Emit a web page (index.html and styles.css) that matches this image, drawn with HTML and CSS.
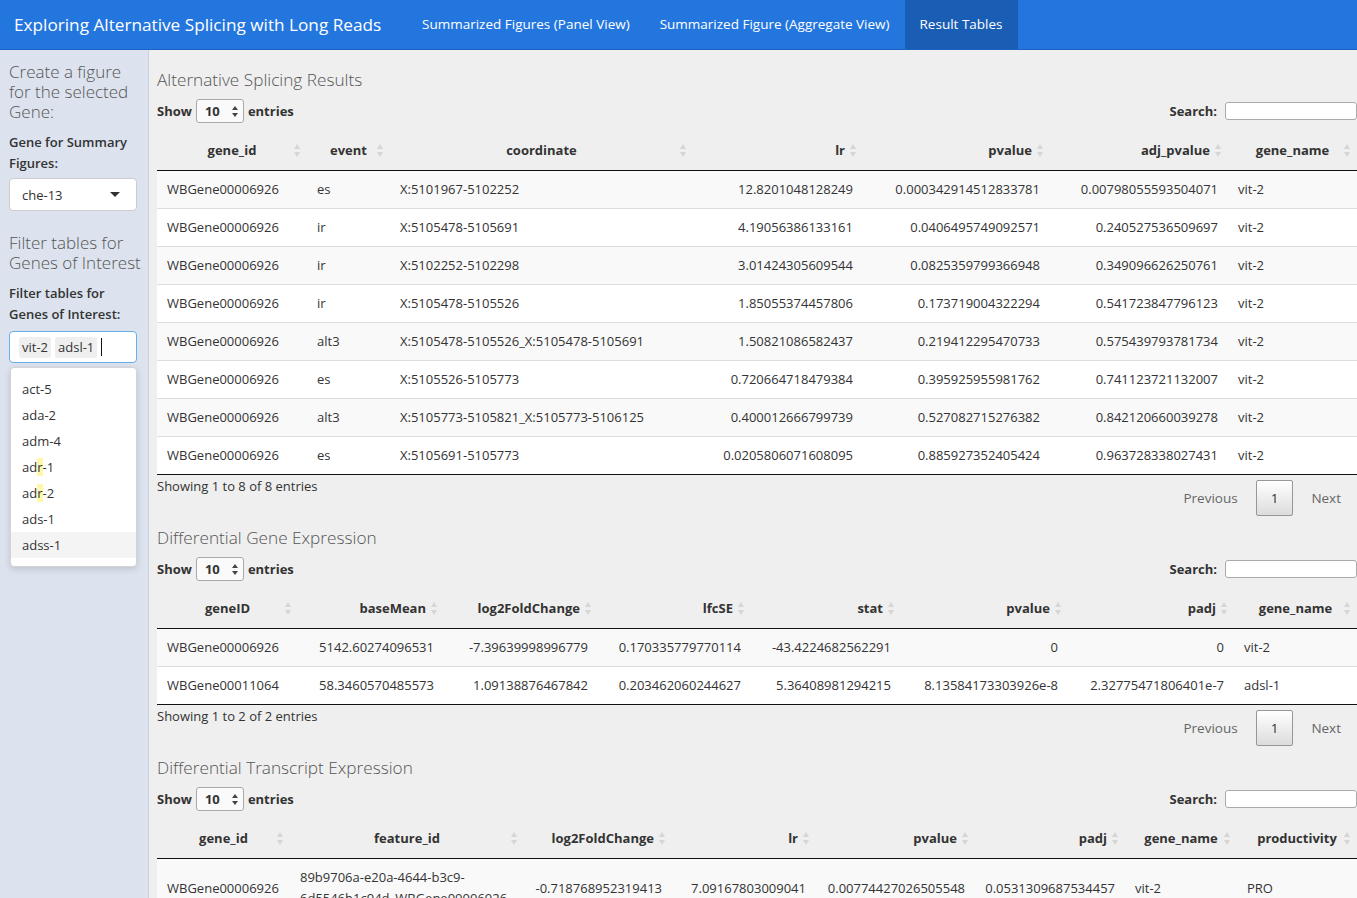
FILE: index.html
```html
<!DOCTYPE html>
<html>
<head>
<meta charset="utf-8">
<title>Exploring Alternative Splicing with Long Reads</title>
<link rel="stylesheet" href="styles.css">
</head>
<body>
<nav class="navbar">
  <span class="brand">Exploring Alternative Splicing with Long Reads</span>
  <ul class="tabs">
    <li class="tab">Summarized Figures (Panel View)</li>
    <li class="tab">Summarized Figure (Aggregate View)</li>
    <li class="tab active">Result Tables</li>
  </ul>
</nav>
<div class="layout">
  <aside class="sidebar">
    <h4 class="side-title">Create a figure for the selected Gene:</h4>
    <label class="ctl-label">Gene for Summary Figures:</label>
    <div class="select-box"><span>che-13</span><span class="caret"></span></div>
    <h4 class="side-title second">Filter tables for Genes of Interest</h4>
    <label class="ctl-label">Filter tables for Genes of Interest:</label>
    <div class="multi">
      <div class="multi-input"><span class="chip">vit-2</span><span class="chip">adsl-1</span><span class="cursor"></span></div>
      <div class="dropdown">
        <ul class="options">
          <li>acs-2</li>
          <li>act-5</li>
          <li>ada-2</li>
          <li>adm-4</li>
          <li>ad<span class="hl">r</span>-1</li>
          <li>ad<span class="hl">r</span>-2</li>
          <li>ads-1</li>
          <li class="hover">adss-1</li>
          <li>aex-5</li>
        </ul>
      </div>
    </div>
  </aside>
  <main class="main">
    <section class="block">
      <h4 class="block-title">Alternative Splicing Results</h4>
      <div class="dt-top">
        <label class="len">Show <span class="len-select">10<span class="spin"></span></span> entries</label>
        <label class="search">Search: <span class="search-input"></span></label>
      </div>
      <table class="dt t1">
        <colgroup><col class="c1"><col class="c2"><col class="c3"><col class="c4"><col class="c5"><col class="c6"><col class="c7"></colgroup>
        <thead>
          <tr><th class="s">gene_id</th><th class="s">event</th><th class="s">coordinate</th><th class="s r">lr</th><th class="s r">pvalue</th><th class="s r">adj_pvalue</th><th class="s">gene_name</th></tr>
        </thead>
        <tbody>
          <tr><td>WBGene00006926</td><td>es</td><td>X:5101967-5102252</td><td class="r">12.8201048128249</td><td class="r">0.000342914512833781</td><td class="r">0.00798055593504071</td><td>vit-2</td></tr>
          <tr><td>WBGene00006926</td><td>ir</td><td>X:5105478-5105691</td><td class="r">4.19056386133161</td><td class="r">0.0406495749092571</td><td class="r">0.240527536509697</td><td>vit-2</td></tr>
          <tr><td>WBGene00006926</td><td>ir</td><td>X:5102252-5102298</td><td class="r">3.01424305609544</td><td class="r">0.0825359799366948</td><td class="r">0.349096626250761</td><td>vit-2</td></tr>
          <tr><td>WBGene00006926</td><td>ir</td><td>X:5105478-5105526</td><td class="r">1.85055374457806</td><td class="r">0.173719004322294</td><td class="r">0.541723847796123</td><td>vit-2</td></tr>
          <tr><td>WBGene00006926</td><td>alt3</td><td>X:5105478-5105526_X:5105478-5105691</td><td class="r">1.50821086582437</td><td class="r">0.219412295470733</td><td class="r">0.575439793781734</td><td>vit-2</td></tr>
          <tr><td>WBGene00006926</td><td>es</td><td>X:5105526-5105773</td><td class="r">0.720664718479384</td><td class="r">0.395925955981762</td><td class="r">0.741123721132007</td><td>vit-2</td></tr>
          <tr><td>WBGene00006926</td><td>alt3</td><td>X:5105773-5105821_X:5105773-5106125</td><td class="r">0.400012666799739</td><td class="r">0.527082715276382</td><td class="r">0.842120660039278</td><td>vit-2</td></tr>
          <tr><td>WBGene00006926</td><td>es</td><td>X:5105691-5105773</td><td class="r">0.0205806071608095</td><td class="r">0.885927352405424</td><td class="r">0.963728338027431</td><td>vit-2</td></tr>
        </tbody>
      </table>
      <div class="dt-bottom">
        <div class="info">Showing 1 to 8 of 8 entries</div>
        <div class="paginate"><span class="pbtn disabled">Previous</span><span class="pbtn current">1</span><span class="pbtn disabled">Next</span></div>
      </div>
    </section>

    <section class="block">
      <h4 class="block-title">Differential Gene Expression</h4>
      <div class="dt-top">
        <label class="len">Show <span class="len-select">10<span class="spin"></span></span> entries</label>
        <label class="search">Search: <span class="search-input"></span></label>
      </div>
      <table class="dt t2">
        <colgroup><col class="c1"><col class="c2"><col class="c3"><col class="c4"><col class="c5"><col class="c6"><col class="c7"><col class="c8"></colgroup>
        <thead>
          <tr><th class="s">geneID</th><th class="s r">baseMean</th><th class="s r">log2FoldChange</th><th class="s r">lfcSE</th><th class="s r">stat</th><th class="s r">pvalue</th><th class="s r">padj</th><th class="s">gene_name</th></tr>
        </thead>
        <tbody>
          <tr><td>WBGene00006926</td><td class="r">5142.60274096531</td><td class="r">-7.39639998996779</td><td class="r">0.170335779770114</td><td class="r">-43.4224682562291</td><td class="r">0</td><td class="r">0</td><td>vit-2</td></tr>
          <tr><td>WBGene00011064</td><td class="r">58.3460570485573</td><td class="r">1.09138876467842</td><td class="r">0.203462060244627</td><td class="r">5.36408981294215</td><td class="r">8.13584173303926e-8</td><td class="r">2.32775471806401e-7</td><td>adsl-1</td></tr>
        </tbody>
      </table>
      <div class="dt-bottom">
        <div class="info">Showing 1 to 2 of 2 entries</div>
        <div class="paginate"><span class="pbtn disabled">Previous</span><span class="pbtn current">1</span><span class="pbtn disabled">Next</span></div>
      </div>
    </section>

    <section class="block">
      <h4 class="block-title">Differential Transcript Expression</h4>
      <div class="dt-top">
        <label class="len">Show <span class="len-select">10<span class="spin"></span></span> entries</label>
        <label class="search">Search: <span class="search-input"></span></label>
      </div>
      <table class="dt t3">
        <colgroup><col class="c1"><col class="c2"><col class="c3"><col class="c4"><col class="c5"><col class="c6"><col class="c7"><col class="c8"></colgroup>
        <thead>
          <tr><th class="s">gene_id</th><th class="s">feature_id</th><th class="s r">log2FoldChange</th><th class="s r">lr</th><th class="s r">pvalue</th><th class="s r">padj</th><th class="s">gene_name</th><th class="s">productivity</th></tr>
        </thead>
        <tbody>
          <tr><td>WBGene00006926</td><td>89b9706a-e20a-4644-b3c9-6d5546b1c94d_WBGene00006926</td><td class="r">-0.718768952319413</td><td class="r">7.09167803009041</td><td class="r">0.00774427026505548</td><td class="r">0.0531309687534457</td><td>vit-2</td><td>PRO</td></tr>
        </tbody>
      </table>
    </section>
  </main>
</div>
</body>
</html>
```

FILE: styles.css
```css
html, body {
  margin: 0;
  padding: 0;
  height: 100%;
  overflow: hidden;
}
body {
  font-family: "Open Sans", "Liberation Sans", sans-serif;
  font-size: 13px;
  color: #333;
  background: #efefef;
}

/* navbar */
.navbar {
  height: 50px;
  box-sizing: border-box;
  background: #2476df;
  border-bottom: 1px solid #1c62c2;
  display: flex;
  align-items: stretch;
  color: #fff;
}
.brand {
  width: 407px;
  box-sizing: border-box;
  padding-left: 14px;
  font-size: 17.2px;
  line-height: 49px;
  white-space: nowrap;
}
.tabs {
  list-style: none;
  margin: 0;
  padding: 0;
  display: flex;
}
.tab {
  padding: 0 15px;
  line-height: 49px;
  font-size: 13.5px;
  white-space: nowrap;
}
.tab.active {
  background: #1a5db5;
}

/* layout */
.layout {
  display: flex;
  height: calc(100vh - 50px);
}
.sidebar {
  flex: none;
  width: 149px;
  box-sizing: border-box;
  background: #dce3ee;
  border-right: 1px solid #c8d1dd;
  padding: 12px 0 0 9px;
}
.side-title {
  margin: 0;
  font-size: 17px;
  font-weight: 300;
  line-height: 20px;
  color: #555;
  width: 132px;
}
.side-title.second {
  margin-top: 22px;
}
.ctl-label {
  display: block;
  margin-top: 10px;
  font-weight: 600;
  line-height: 21px;
  width: 130px;
}
.select-box {
  margin-top: 4px;
  width: 128px;
  height: 33px;
  box-sizing: border-box;
  background: #fff;
  border: 1px solid #ccc;
  border-radius: 4px;
  display: flex;
  align-items: center;
  justify-content: space-between;
  padding: 0 16px 0 12px;
}
.caret {
  width: 0;
  height: 0;
  border-left: 5px solid transparent;
  border-right: 5px solid transparent;
  border-top: 5px solid #333;
}
.multi {
  position: relative;
  margin-top: 6px;
  width: 128px;
}
.multi-input {
  height: 32px;
  box-sizing: border-box;
  background: #fff;
  border: 1px solid #66afe9;
  border-radius: 4px;
  display: flex;
  align-items: center;
  gap: 4px;
  padding: 0 0 0 9px;
}
.chip {
  background: #efefef;
  border-radius: 3px;
  padding: 0 3px;
  line-height: 21px;
}
.cursor {
  width: 1px;
  height: 18px;
  background: #111;
}
.dropdown {
  position: absolute;
  top: 36px;
  left: 1px;
  width: 127px;
  height: 200px;
  background: #fff;
  border: 1px solid #d4d4d4;
  border-radius: 4px;
  box-sizing: border-box;
  box-shadow: 0 2px 6px rgba(0, 0, 0, 0.15);
  overflow: hidden;
}
.options {
  list-style: none;
  margin: -18px 0 0 0;
  padding: 0;
}
.options li {
  height: 26px;
  line-height: 26px;
  padding-left: 11px;
}
.options li.hover {
  background: #f4f4f4;
}
.hl {
  background: rgba(255, 237, 40, 0.4);
}

/* main */
.main {
  flex: 1;
  padding: 18px 0 0 8px;
  min-width: 0;
}
.block {
  margin-bottom: 10px;
}
.block-title {
  margin: 0;
  height: 24px;
  font-size: 17.2px;
  font-weight: 300;
  line-height: 24px;
  color: #555;
}
.dt-top {
  margin-top: 7px;
  height: 24px;
  display: flex;
  justify-content: space-between;
  align-items: center;
  font-weight: 700;
}
.len, .search {
  display: flex;
  align-items: center;
  gap: 4px;
}
.len-select {
  width: 48px;
  height: 24px;
  box-sizing: border-box;
  border: 1px solid #aaa;
  border-radius: 3px;
  background: #fafafa;
  display: flex;
  align-items: center;
  justify-content: space-between;
  padding: 0 5px 0 8px;
}
.spin {
  position: relative;
  width: 6px;
  height: 11px;
}
.spin::before, .spin::after {
  content: "";
  position: absolute;
  left: 0;
  border-left: 3px solid transparent;
  border-right: 3px solid transparent;
}
.spin::before { top: 0; border-bottom: 4px solid #444; }
.spin::after { bottom: 0; border-top: 4px solid #444; }
.search-input {
  width: 132px;
  height: 18px;
  box-sizing: border-box;
  border: 1px solid #aaa;
  border-radius: 3px;
  background: #fff;
  margin-left: 4px;
}

/* tables */
.dt {
  margin-top: 7px;
  width: 100%;
  table-layout: fixed;
  border-collapse: collapse;
  border-spacing: 0;
}
.dt th {
  position: relative;
  font-weight: 700;
  text-align: center;
  padding: 10px 18px 9px 18px;
  line-height: 21px;
  border-bottom: 1px solid #111;
  white-space: nowrap;
}
.dt th.r { text-align: right; }
.dt th.s::before, .dt th.s::after {
  content: "";
  position: absolute;
  right: 7px;
  border-left: 3.5px solid transparent;
  border-right: 3.5px solid transparent;
}
.dt th.s::before {
  top: 14px;
  border-bottom: 5px solid #d6d6d6;
}
.dt th.s::after {
  top: 22px;
  border-top: 5px solid #d6d6d6;
}
.dt td {
  padding: 8px 10px;
  line-height: 21px;
  border-bottom: 1px solid #ddd;
  vertical-align: middle;
}
.dt td.r { text-align: right; }
.dt tbody tr:nth-child(odd) { background: #f9f9f9; }
.dt tbody tr:nth-child(even) { background: #fff; }
.dt tbody tr:last-child td { border-bottom: 1px solid #111; }

.t1 .c1 { width: 150px; }
.t1 .c2 { width: 83px; }
.t1 .c3 { width: 303px; }
.t1 .c4 { width: 170px; }
.t1 .c5 { width: 187px; }
.t1 .c6 { width: 178px; }
.t1 .c7 { width: 129px; }

.t2 .c1 { width: 141px; }
.t2 .c2 { width: 146px; }
.t2 .c3 { width: 154px; }
.t2 .c4 { width: 153px; }
.t2 .c5 { width: 150px; }
.t2 .c6 { width: 167px; }
.t2 .c7 { width: 166px; }
.t2 .c8 { width: 123px; }

.t3 .c1 { width: 133px; }
.t3 .c2 { width: 234px; }
.t3 .c3 { width: 148px; }
.t3 .c4 { width: 144px; }
.t3 .c5 { width: 159px; }
.t3 .c6 { width: 150px; }
.t3 .c7 { width: 112px; }
.t3 .c8 { width: 120px; }

.dt-bottom {
  display: flex;
  justify-content: space-between;
  align-items: flex-start;
  height: 41px;
}
.info {
  line-height: 22px;
}
.paginate {
  margin-top: 5px;
  display: flex;
  gap: 2px;
}
.pbtn {
  padding: 6px 15px;
  line-height: 22px;
  border: 1px solid transparent;
  border-radius: 2px;
  font-size: 13.5px;
}
.pbtn.disabled { color: #666; }
.pbtn.current {
  padding: 6px 14px;
  border-color: #979797;
  color: #333;
  background: linear-gradient(to bottom, #fff 0%, #dcdcdc 100%);
}
```
